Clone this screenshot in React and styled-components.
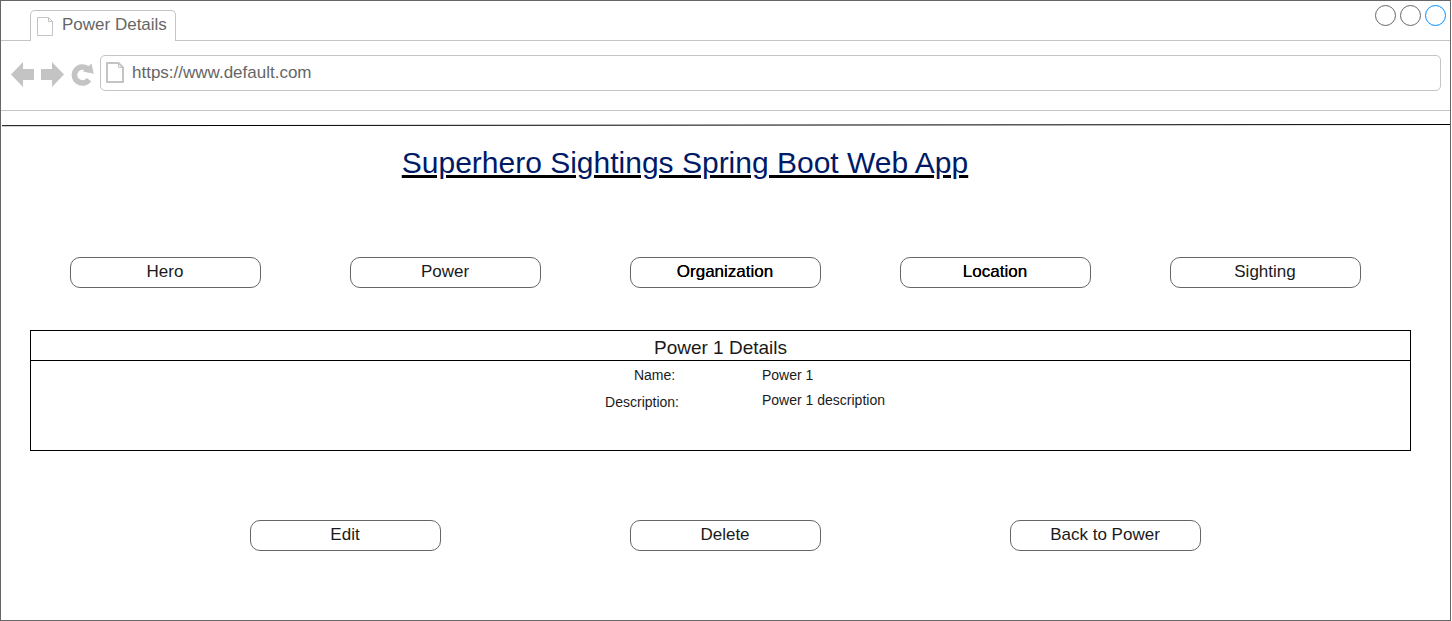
import React from 'react';
import styled, { createGlobalStyle } from 'styled-components';

const Global = createGlobalStyle`
  * { box-sizing: border-box; }
  body { margin: 0; background: #fff; }
  button, input { font: inherit; }
`;

const Frame = styled.div`
  display: flex;
  flex-direction: column;
  min-height: 100vh;
  margin-right: 1px;
  border: 1px solid #666;
  background: #fff;
  color: #1a1a1a;
  font: 17px/20px "Liberation Sans", Arial, sans-serif;
`;

const TabBar = styled.div`
  display: flex;
  align-items: flex-end;
  justify-content: space-between;
  height: 40px;
  padding: 0 4px 0 29px;
  border-bottom: 1px solid #c4c4c4;
`;

const Tab = styled.div`
  display: flex;
  align-items: center;
  gap: 9px;
  height: 31px;
  margin-bottom: -1px;
  padding: 0 8px 0 6px;
  border: 1px solid #c4c4c4;
  border-bottom: 0;
  border-radius: 5px 5px 0 0;
  background: #fff;
  color: #666;
`;

const TabTitle = styled.span`
  padding-bottom: 2px;
`;

const WindowControls = styled.div`
  display: flex;
  align-self: flex-start;
  gap: 4px;
  padding-top: 4px;
`;

const WindowButton = styled.button`
  width: 21px;
  height: 21px;
  padding: 0;
  border: 1px solid ${(p) => (p.$active ? '#008cff' : '#666')};
  border-radius: 50%;
  background: none;
`;

const Toolbar = styled.div`
  display: flex;
  align-items: center;
  height: 70px;
  padding: 0 9px 6px 10px;
  border-bottom: 1px solid #c4c4c4;
`;

const ToolButtons = styled.div`
  display: flex;
  gap: 7px;
  padding: 3px 6px 0 0;
`;

const ToolButton = styled.button`
  display: flex;
  padding: 0;
  border: 0;
  background: none;
`;

const AddressBox = styled.label`
  display: flex;
  flex: 1;
  align-items: center;
  gap: 8px;
  height: 36px;
  padding: 0 5px;
  border: 1px solid #c4c4c4;
  border-radius: 5px;
`;

const AddressInput = styled.input`
  flex: 1;
  min-width: 0;
  height: 20px;
  padding: 0;
  border: 0;
  outline: 0;
  background: none;
  color: #666;
`;

const Rule = styled.svg`
  display: block;
  width: 100%;
  height: 4px;
  margin-top: 12px;
`;

const Title = styled.h1`
  margin: 19px 0 0;
  padding-right: 81px;
  color: #001a66;
  font-size: 30px;
  font-weight: 400;
  line-height: 34px;
  text-align: center;
  text-decoration: underline 3px #000;
  text-underline-offset: 2px;
`;

const Nav = styled.nav`
  display: grid;
  grid-template-columns: 280fr 280fr 270fr 270fr 191fr;
  padding: 77px 89px 0 69px;
`;

const PillButton = styled.button`
  width: 191px;
  height: 31px;
  padding: 0 1px 2px 0;
  border: 1px solid #666;
  border-radius: 10px;
  background: #fff;
  color: ${(p) => (p.$strong ? '#000' : '#1a1a1a')};
  line-height: 20px;
  text-shadow: ${(p) => (p.$strong ? '0 0 0 #000' : 'none')};
`;

const Panel = styled.section`
  min-height: 121px;
  margin: 42px 39px 0 29px;
  border: 1px solid #000;
`;

const PanelTitle = styled.h2`
  margin: 0;
  padding: 6px 0 1px;
  border-bottom: 1px solid #000;
  font-size: 19px;
  font-weight: 400;
  line-height: 22px;
  text-align: center;
`;

const Details = styled.dl`
  display: flex;
  flex-direction: column;
  gap: 7px;
  margin: 0;
  padding-top: 4px;
  font-size: 14px;
`;

const DetailRow = styled.div`
  display: grid;
  grid-template-columns: 1fr 1fr;
  column-gap: 83px;
  align-items: ${(p) => p.$align};
`;

const Term = styled.dt`
  line-height: 20px;
  text-align: right;
  white-space: pre;
`;

const Value = styled.dd`
  margin: 0;
  line-height: 16px;
`;

const Actions = styled.div`
  display: flex;
  justify-content: space-between;
  padding: 69px 249px 0;
`;

const TabPageIcon = () => (
  <svg width="16" height="19" viewBox="0 0 16 19" fill="none" stroke="#c4c4c4" aria-hidden="true">
    <path d="M.5.5h11l4 4v14H.5zM11.5.5v4h4" />
  </svg>
);

const PageIcon = () => (
  <svg width="18" height="21" viewBox="0 0 18 21" fill="none" stroke="#c4c4c4" strokeWidth="2" aria-hidden="true">
    <path d="M1 1h11.5l4.5 4.5V20H1z" />
    <path d="M12.5 1v4.5H17" strokeWidth="1" />
  </svg>
);

const ArrowIcon = ({ d }) => (
  <svg width="23" height="25" viewBox="0 0 23 25" fill="#c4c4c4" aria-hidden="true">
    <path d={d} />
  </svg>
);

const ReloadIcon = () => (
  <svg width="23" height="25" viewBox="0 0 23 25" aria-hidden="true">
    <path d="M17 7.2A8 8 0 1 0 18 17.6" fill="none" stroke="#c4c4c4" strokeWidth="5.6" />
    <path d="M20.5 1.5l2.3 10.3-11-2.3z" fill="#c4c4c4" />
  </svg>
);

const links = [
  { label: 'Hero' },
  { label: 'Power' },
  { label: 'Organization', strong: true },
  { label: 'Location', strong: true },
  { label: 'Sighting' },
];

export default function App() {
  return (
    <>
      <Global />
      <Frame>
        <TabBar>
          <Tab>
            <TabPageIcon />
            <TabTitle>Power Details</TabTitle>
          </Tab>
          <WindowControls>
            <WindowButton aria-label="Minimize" />
            <WindowButton aria-label="Maximize" />
            <WindowButton aria-label="Close" $active />
          </WindowControls>
        </TabBar>
        <Toolbar>
          <ToolButtons>
            <ToolButton aria-label="Back">
              <ArrowIcon d="M0 12.5L12 0v7h11v11H12v7z" />
            </ToolButton>
            <ToolButton aria-label="Forward">
              <ArrowIcon d="M23 12.5L11 0v7H0v11h11v7z" />
            </ToolButton>
            <ToolButton aria-label="Reload">
              <ReloadIcon />
            </ToolButton>
          </ToolButtons>
          <AddressBox>
            <PageIcon />
            <AddressInput aria-label="Address" defaultValue="https://www.default.com" />
          </AddressBox>
        </Toolbar>
        <Rule viewBox="0 0 1449 4" preserveAspectRatio="none" aria-hidden="true">
          <path d="M1 2.7L1449 1.5" stroke="#000" fill="none" />
        </Rule>
        <main>
          <Title>Superhero Sightings Spring Boot Web App</Title>
          <Nav>
            {links.map((link) => (
              <PillButton key={link.label} $strong={link.strong}>{link.label}</PillButton>
            ))}
          </Nav>
          <Panel>
            <PanelTitle>Power 1 Details</PanelTitle>
            <Details>
              <DetailRow $align="center">
                <Term>{'Name: '}</Term>
                <Value>Power 1</Value>
              </DetailRow>
              <DetailRow $align="start">
                <Term>Description:</Term>
                <Value>Power 1 description</Value>
              </DetailRow>
            </Details>
          </Panel>
          <Actions>
            <PillButton>Edit</PillButton>
            <PillButton>Delete</PillButton>
            <PillButton>Back to Power</PillButton>
          </Actions>
        </main>
      </Frame>
    </>
  );
}
